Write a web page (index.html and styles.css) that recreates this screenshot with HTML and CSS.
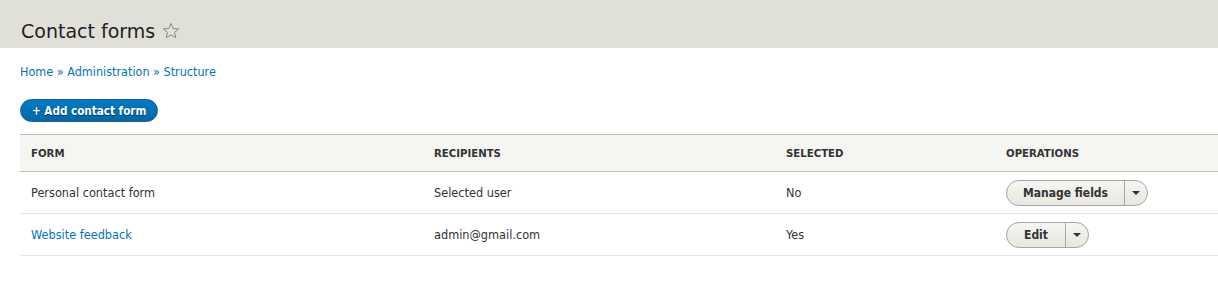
FILE: index.html
```html
<!DOCTYPE html>
<html>

<head>
  <meta charset="utf-8" />
  <title>Contact forms</title>
  <link rel="stylesheet" href="styles.css">
</head>

<body>
  <div class="page-header">
    <h1 class="page-title">Contact forms</h1>
    <svg class="shortcut-star" width="18" height="18" viewBox="0 0 18 18">
      <path d="M9 1.5l2.2 5 5.4.4-4.1 3.5 1.3 5.3L9 12.9l-4.8 2.8 1.3-5.3L1.4 6.9l5.4-.4z" fill="none" stroke="#8a8a86" stroke-width="1" />
    </svg>
  </div>

  <div class="content">
    <nav class="breadcrumb">
      <a href="#">Home</a> » <a href="#">Administration</a> » <a href="#">Structure</a>
    </nav>

    <div class="action-links">
      <a class="button button-primary" href="#">+ Add contact form</a>
    </div>

    <table class="admin-table">
      <thead>
        <tr>
          <th class="col-form">Form</th>
          <th class="col-recipients">Recipients</th>
          <th class="col-selected">Selected</th>
          <th class="col-operations">Operations</th>
        </tr>
      </thead>
      <tbody>
        <tr>
          <td>Personal contact form</td>
          <td>Selected user</td>
          <td>No</td>
          <td>
            <div class="dropbutton">
              <a class="dropbutton-action" href="#">Manage fields</a>
              <span class="dropbutton-toggle"><span class="arrow"></span></span>
            </div>
          </td>
        </tr>
        <tr>
          <td><a href="#">Website feedback</a></td>
          <td>admin@gmail.com</td>
          <td>Yes</td>
          <td>
            <div class="dropbutton dropbutton-short">
              <a class="dropbutton-action" href="#">Edit</a>
              <span class="dropbutton-toggle"><span class="arrow"></span></span>
            </div>
          </td>
        </tr>
      </tbody>
    </table>
  </div>
</body>

</html>
```

FILE: styles.css
```css
body {
  margin: 0;
  font-family: "DejaVu Sans Condensed", "DejaVu Sans", sans-serif;
  font-size: 12.6px;
  color: #222;
  background: #fff;
}

a {
  color: #0074bd;
  text-decoration: none;
}

.page-header {
  height: 48px;
  box-sizing: border-box;
  padding: 18px 0 0 21px;
  background: #e0e0d8;
  display: flex;
  align-items: flex-start;
}

.page-title {
  margin: 0;
  font-family: "DejaVu Sans", sans-serif;
  font-size: 19px;
  font-weight: normal;
  line-height: 26px;
  color: #1f2024;
}

.shortcut-star {
  margin: 4px 0 0 7px;
}

.content {
  padding: 0 0 0 20px;
}

.breadcrumb {
  padding-top: 16px;
  line-height: 16px;
  font-size: 12.5px;
  color: #0074bd;
}

.action-links {
  margin-top: 19px;
}

.button {
  display: inline-block;
  font-weight: bold;
  border-radius: 20px;
}

.button-primary {
  height: 23px;
  line-height: 22px;
  box-sizing: border-box;
  padding: 0 11px;
  color: #fff;
  background: linear-gradient(to bottom, #007bc6, #0067a9);
  border: 1px solid #1e5c90;
  text-shadow: 0 1px 1px rgba(0, 0, 0, 0.5);
  font-size: 11.6px;
}

.admin-table {
  width: 100%;
  margin-top: 12px;
  border-collapse: collapse;
  border-top: 1px solid #bfbfba;
}

.admin-table th {
  height: 36px;
  padding: 0 11px;
  text-align: left;
  text-transform: uppercase;
  font-size: 11.3px;
  font-weight: bold;
  color: #333;
  background: #f5f5f2;
  border-bottom: 1px solid #bfbfba;
}

.col-form { width: 381px; }
.col-recipients { width: 330px; }
.col-selected { width: 198px; }

.admin-table td {
  height: 41px;
  padding: 0 11px;
  color: #333;
  border-bottom: 1px solid #e6e4df;
}

.dropbutton {
  display: inline-flex;
  height: 26px;
  box-sizing: border-box;
  border: 1px solid #a6a6a6;
  border-radius: 20px;
  background: linear-gradient(to bottom, #f6f6f3, #e7e7df);
  vertical-align: middle;
}

.dropbutton-action {
  width: 117px;
  line-height: 24px;
  text-align: center;
  font-size: 12px;
  font-weight: bold;
  color: #333;
}

.dropbutton-short .dropbutton-action {
  width: 58px;
}

.dropbutton-toggle {
  width: 22px;
  border-left: 1px solid #a6a6a6;
  display: flex;
  align-items: center;
  justify-content: center;
}

.arrow {
  width: 0;
  height: 0;
  margin-top: 1px;
  border-left: 4px solid transparent;
  border-right: 4px solid transparent;
  border-top: 4px solid #333;
}
```
